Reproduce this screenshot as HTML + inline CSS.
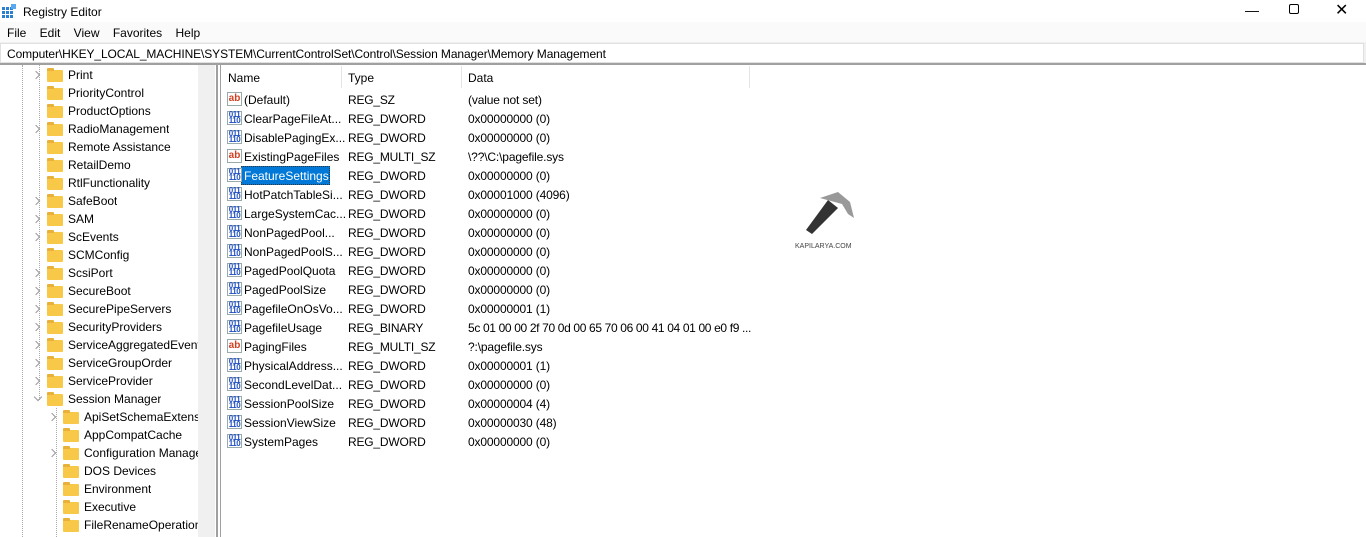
<!DOCTYPE html><html><head><style>
*{margin:0;padding:0;box-sizing:border-box}
body{width:1366px;height:537px;overflow:hidden;background:#fff;font-family:"Liberation Sans",sans-serif;font-size:12px;color:#000;position:relative}
.abs{position:absolute;white-space:nowrap}
.fold{position:absolute;width:16px;height:12px;background:#f8c948;border-radius:1px}
.fold:before{content:"";position:absolute;left:0;top:-2px;width:7px;height:3px;background:#e8b23a;border-radius:1px 1px 0 0}
.chev{position:absolute;width:6px;height:6px;border-right:1.2px solid #999;border-bottom:1.2px solid #999}
.ic{position:absolute;width:15px;height:14px;border:1px solid #9aa;background:#fff;font-size:8px;line-height:6px;font-weight:bold;text-align:center}
.ab{color:#d04020;font-size:10px;line-height:12px}
.bin{color:#2050c0;letter-spacing:-0.5px}
</style></head><body>
<svg class="abs" style="left:2px;top:4px" width="14" height="14"><rect x="0" y="3" width="11" height="11" fill="#2a7fd0"/><g stroke="#fff" stroke-width="1"><line x1="0" y1="6.5" x2="11" y2="6.5"/><line x1="0" y1="10.5" x2="11" y2="10.5"/><line x1="3.5" y1="3" x2="3.5" y2="14"/><line x1="7.5" y1="3" x2="7.5" y2="14"/></g><rect x="9" y="0" width="5" height="5" fill="#5aa8f0"/></svg>
<div class="abs" style="left:23px;top:5px">Registry Editor</div>
<div class="abs" style="left:1245px;top:2px;font-size:14px">—</div>
<div class="abs" style="left:1289px;top:4px;width:10px;height:10px;border:1px solid #000;border-radius:2px"></div>
<div class="abs" style="left:1335px;top:0px;font-size:16px">✕</div>
<div class="abs" style="left:0;top:22px;width:1366px;height:20px;background:#fafafa"></div>
<div class="abs" style="left:7px;top:26px">File&nbsp;&nbsp;&nbsp; Edit&nbsp;&nbsp;&nbsp; View&nbsp;&nbsp;&nbsp; Favorites&nbsp;&nbsp;&nbsp; Help</div>
<div class="abs" style="left:0;top:42px;width:1366px;height:22px;background:#f0f0f0"></div>
<div class="abs" style="left:0;top:43px;width:1364px;height:20px;background:#fff;border:1px solid #e0e0e0;padding:3px 6px;letter-spacing:-0.1px">Computer\HKEY_LOCAL_MACHINE\SYSTEM\CurrentControlSet\Control\Session Manager\Memory Management</div>
<div class="abs" style="left:0;top:63px;width:1366px;height:2px;background:#a0a0a0"></div>
<div class="abs" style="left:198px;top:65px;width:17px;height:472px;background:#f0f0f0"></div>
<div class="abs" style="left:216px;top:65px;width:2px;height:472px;background:#a0a0a0"></div>
<div class="abs" style="left:218px;top:65px;width:2px;height:472px;background:#fff"></div>
<div class="abs" style="left:220px;top:65px;width:1px;height:472px;background:#a0a0a0"></div>
<div class="abs" style="left:22px;top:65px;height:472px;border-left:1px dotted #aaa"></div>
<div class="abs" style="left:39px;top:65px;height:335px;border-left:1px dotted #aaa"></div>
<div class="abs" style="left:56px;top:408px;height:129px;border-left:1px dotted #aaa"></div>
<div id="tree"></div>
<div class="abs" style="left:228px;top:71px">Name</div>
<div class="abs" style="left:341px;top:66px;height:22px;border-left:1px solid #e5e5e5"></div>
<div class="abs" style="left:348px;top:71px">Type</div>
<div class="abs" style="left:461px;top:66px;height:22px;border-left:1px solid #e5e5e5"></div>
<div class="abs" style="left:468px;top:71px">Data</div>
<div class="abs" style="left:749px;top:66px;height:22px;border-left:1px solid #e5e5e5"></div>
<div class="abs" style="left:241px;top:166px;width:89px;height:19px;background:#0078d7;border:1px dotted #333"></div>
<div id="list"></div>
<svg class="abs" style="left:798px;top:190px" width="60" height="50"><path d="M22 8 L40 2 L52 12 L56 28 L50 24 L44 14 Z" fill="#999"/><path d="M30 10 L40 18 L14 44 L8 40 Z" fill="#333"/></svg>
<div class="abs" style="left:795px;top:243px;font-size:7px;color:#444">KAPILARYA.COM</div>
<script>
var t=[["Print",1],["PriorityControl",0],["ProductOptions",0],["RadioManagement",1],["Remote Assistance",0],["RetailDemo",0],["RtlFunctionality",0],["SafeBoot",1],["SAM",1],["ScEvents",1],["SCMConfig",0],["ScsiPort",1],["SecureBoot",1],["SecurePipeServers",1],["SecurityProviders",1],["ServiceAggregatedEvents",1],["ServiceGroupOrder",1],["ServiceProvider",1],["Session Manager",2],["ApiSetSchemaExtensions",1,1],["AppCompatCache",0,1],["Configuration Manager",1,1],["DOS Devices",0,1],["Environment",0,1],["Executive",0,1],["FileRenameOperations",0,1]];
var h="";t.forEach(function(r,i){var y=66+i*18,ind=r[2]?16:0;
if(r[1]==1)h+='<div class="chev" style="left:'+(33+ind)+'px;top:'+(y+6)+'px;transform:rotate(-45deg)"></div>';
if(r[1]==2)h+='<div class="chev" style="left:'+(35+ind)+'px;top:'+(y+4)+'px;transform:rotate(45deg)"></div>';
h+='<div class="fold" style="left:'+(47+ind)+'px;top:'+(y+4)+'px"></div><div class="abs" style="left:'+(68+ind)+'px;top:'+(y+2)+'px;max-width:'+(130-ind)+'px;overflow:hidden">'+r[0]+'</div>';});
document.getElementById("tree").innerHTML=h;
var l=[["(Default)","REG_SZ","(value not set)"],["ClearPageFileAt...","REG_DWORD","0x00000000 (0)"],["DisablePagingEx...","REG_DWORD","0x00000000 (0)"],["ExistingPageFiles","REG_MULTI_SZ","\\??\\C:\\pagefile.sys"],["FeatureSettings","REG_DWORD","0x00000000 (0)"],["HotPatchTableSi...","REG_DWORD","0x00001000 (4096)"],["LargeSystemCac...","REG_DWORD","0x00000000 (0)"],["NonPagedPool...","REG_DWORD","0x00000000 (0)"],["NonPagedPoolS...","REG_DWORD","0x00000000 (0)"],["PagedPoolQuota","REG_DWORD","0x00000000 (0)"],["PagedPoolSize","REG_DWORD","0x00000000 (0)"],["PagefileOnOsVo...","REG_DWORD","0x00000001 (1)"],["PagefileUsage","REG_BINARY","<span style=\"letter-spacing:-0.35px\">5c 01 00 00 2f 70 0d 00 65 70 06 00 41 04 01 00 e0 f9 ...</span>"],["PagingFiles","REG_MULTI_SZ","?:\\pagefile.sys"],["PhysicalAddress...","REG_DWORD","0x00000001 (1)"],["SecondLevelDat...","REG_DWORD","0x00000000 (0)"],["SessionPoolSize","REG_DWORD","0x00000004 (4)"],["SessionViewSize","REG_DWORD","0x00000030 (48)"],["SystemPages","REG_DWORD","0x00000000 (0)"]];
h="";l.forEach(function(r,i){var y=90+i*19,s=r[1].indexOf("SZ")>0;
h+='<div class="ic '+(s?'ab':'bin')+'" style="left:227px;top:'+(y+2)+'px">'+(s?'ab':'011<br>110')+'</div>';
h+='<div class="abs" style="left:244px;top:'+(y+3)+'px;'+(i==4?'color:#fff':'')+'">'+r[0]+'</div><div class="abs" style="left:348px;top:'+(y+3)+'px;letter-spacing:-0.2px">'+r[1]+'</div><div class="abs" style="left:468px;top:'+(y+3)+'px;letter-spacing:-0.15px">'+r[2]+'</div>';});
document.getElementById("list").innerHTML=h;
</script>
</body></html>
